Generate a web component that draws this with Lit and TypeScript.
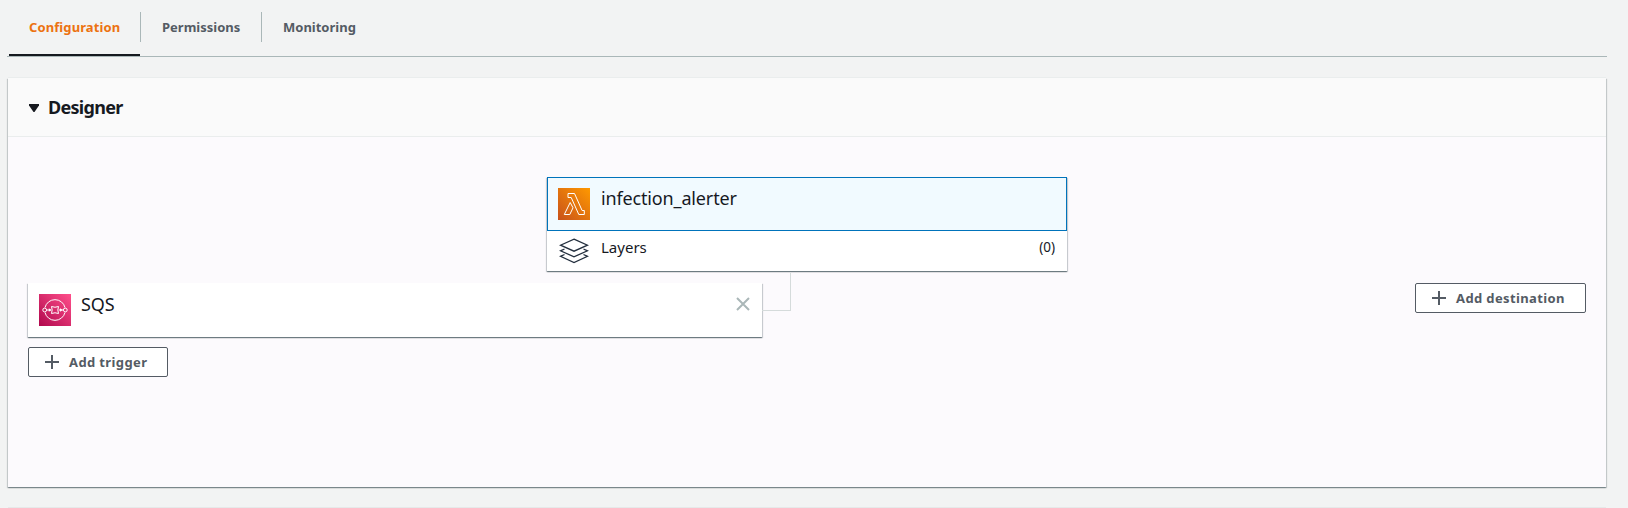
import { LitElement, html, css } from "lit";
import { customElement } from "lit/decorators.js";

@customElement("app-root")
export class AppRoot extends LitElement {
  static styles = css`
    :host { display: block; box-sizing: border-box; height: 508px; overflow: hidden; background: #f2f3f3; padding: 0 21px 0 7px; font-family: "Noto Sans", "Open Sans", sans-serif; color: #16191f; }
    * { box-sizing: border-box; }
    .tabs { display: flex; height: 57px; border-bottom: 1px solid #aab7b8; padding-left: 2px; }
    .tab { height: 56px; padding: 12px 0 0; display: flex; }
    .tab span { height: 30px; line-height: 30px; padding: 0 20px; border-right: 1px solid #aab7b8; font-size: 13px; font-weight: 700; color: #545b64; white-space: nowrap; }
    .tab.active { border-bottom: 2px solid #16191f; width: 131px; }
    .tab.active span { color: #ec7211; width: 132px; flex: none; letter-spacing: .1px; }
    .tab.second span { width: 121px; margin-left: 1px; padding-left: 21px; }
    .tab:last-child span { border: 0; padding-left: 21px; }
    .panel { margin: 21px 1px 0; height: 409px; background: #fcfafd; box-shadow: 0 1px 1px 0 rgba(0,28,36,.3), 1px 1px 1px 0 rgba(0,28,36,.15), -1px 1px 1px 0 rgba(0,28,36,.15), 0 -1px 0 0 #eaeded; }
    .head { height: 59px; background: #fafafa; border-bottom: 1px solid #eaeded; display: flex; align-items: center; padding: 0 21px; }
    .head svg { margin: 1px 9px 0 0; }
    h2 { margin: 0; font-size: 18px; line-height: 24px; font-weight: 700; letter-spacing: -.7px; }
    .canvas { padding: 40px 20px 0; }
    .card { background: #fff; box-shadow: 0 1px 1px 0 rgba(0,28,36,.4), 1px 1px 1px 0 rgba(0,28,36,.15), -1px 1px 1px 0 rgba(0,28,36,.15); }
    .fn { width: 520px; height: 94px; margin: 0 auto; }
    .fn-top { height: 54px; border: 1px solid #0073bb; background: #f1faff; display: flex; padding: 10px; gap: 11px; }
    .name { font-size: 18px; line-height: 20px; letter-spacing: -.15px; }
    .layers { height: 40px; padding: 7px 12px 0 12px; display: flex; }
    .layers svg { margin-right: 12px; }
    .layers .l { flex: 1; font-size: 15px; line-height: 18px; }
    .layers .c { font-size: 13.5px; line-height: 19px; }
    .row { display: flex; align-items: flex-start; margin-top: 12px; }
    .sqs { width: 734px; height: 54px; display: flex; padding: 11px; gap: 10px; }
    .sqs .name { flex: 1; }
    .sqs .x { margin: 3px 1px 0 0; }
    .link { width: 29px; height: 38px; margin-top: -10px; border: solid #d5dbdb; border-width: 0 1px 1px 0; }
    .btn { display: flex; align-items: center; height: 30px; border: 1px solid #545b64; border-radius: 2px; background: #fff; color: #545b64; padding: 0 0 0 16px; gap: 10px; font: 700 13px/28px "Noto Sans", "Open Sans", sans-serif; letter-spacing: .38px; white-space: nowrap; }
    .dest { width: 171px; margin-left: auto; }
    .trigger { width: 140px; margin-top: 10px; }
    svg { flex: none; display: block; }
    .next { height: 2px; margin: 20px 1px 0; background: #e6e9e9; }
  `;

  plus() {
    return html`<svg width="14" height="14" viewBox="0 0 14 14"><path d="M7 0v14M0 7h14" stroke="#545b64" stroke-width="2"/></svg>`;
  }

  render() {
    return html`
      <nav class="tabs">
        <div class="tab active"><span>Configuration</span></div>
        <div class="tab second"><span>Permissions</span></div>
        <div class="tab"><span>Monitoring</span></div>
      </nav>
      <section class="panel">
        <header class="head">
          <svg width="10" height="8" viewBox="0 0 10 8"><path d="M0 0h10v1.500L5.500 8h-1L0 1.500z" fill="#16191f"/></svg>
          <h2>Designer</h2>
        </header>
        <div class="canvas">
          <div class="card fn">
            <div class="fn-top">
              <svg width="32" height="32" viewBox="0 0 32 32">
                <defs><linearGradient id="o" x1="0" y1="1" x2="1" y2="0"><stop stop-color="#c8511b"/><stop offset="1" stop-color="#f90"/></linearGradient></defs>
                <path fill="url(#o)" d="M0 0h32v32H0z"/>
                <path d="M12.200 14.500 6.300 26.500h5.500l3.200-6.700zM10 5.500v4h3.200l7.600 17h5.500v-4h-2.200l-7.600-17z" fill="none" stroke="#fff" stroke-width="1"/>
              </svg>
              <div class="name">infection_alerter</div>
            </div>
            <div class="layers">
              <svg width="30" height="26" viewBox="0 0 30 26" fill="none" stroke="#232f3e" stroke-width="1.300"><path d="M15 1.200 28.500 7.200 15 13.200 1.500 7.200z"/><path d="M5.500 11 1.500 12.800 15 18.800 28.500 12.800 24.500 11M5.500 16.500 1.500 18.300 15 24.500 28.500 18.300 24.500 16.500"/></svg>
              <span class="l">Layers</span><span class="c">(0)</span>
            </div>
          </div>
          <div class="row">
            <div class="card sqs">
              <svg width="32" height="32" viewBox="0 0 32 32">
                <defs><linearGradient id="p" x1="0" y1="1" x2="1" y2="0"><stop stop-color="#b0084d"/><stop offset="1" stop-color="#ff4f8b"/></linearGradient></defs>
                <path fill="url(#p)" d="M0 0h32v32H0z"/>
                <g fill="none" stroke="#fff"><path d="M6 13.500a10.300 10.300 0 0 1 20 0M6 18.500a10.300 10.300 0 0 0 20 0"/><circle cx="5.700" cy="16" r="1.900"/><circle cx="26.300" cy="16" r="1.900"/><path d="M12.500 12.500q3.500 1.500 7 0-1.300 3.500 0 7-3.500-1.500-7 0 1.300-3.500 0-7zM8 16h4M20 16h4"/></g><path d="m9.800 14.200 2.700 1.800-2.700 1.800zM21 14.200l2.700 1.800-2.700 1.800z" fill="#fff"/>
              </svg>
              <div class="name">SQS</div>
              <svg class="x" width="14" height="14" viewBox="0 0 14 14"><path d="m1 1 12 12M13 1 1 13" stroke="#aab7b8" stroke-width="2"/></svg>
            </div>
            <div class="link"></div>
            <button class="btn dest">${this.plus()}<span>Add destination</span></button>
          </div>
          <button class="btn trigger">${this.plus()}<span>Add trigger</span></button>
        </div>
      </section>
      <div class="next"></div>
    `;
  }
}
